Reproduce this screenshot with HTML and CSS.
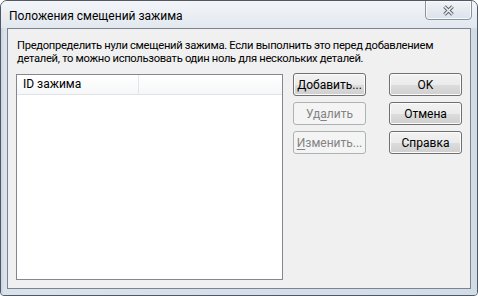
FILE: index.html
```html
<!DOCTYPE html>
<html lang="ru">
<head>
  <meta charset="UTF-8" />
  <title>Положения смещений зажима</title>
  <link rel="stylesheet" href="styles.css">
</head>
<body>
  <div class="window">
    <div class="titlebar">
      <span class="title">Положения смещений зажима</span>
      <div class="close">
        <svg width="13" height="11" viewBox="0 0 13 11">
          <path d="M2.5 1.5 L10.5 9.5 M10.5 1.5 L2.5 9.5" stroke="#5d646d" stroke-width="3.6" fill="none"/>
          <path d="M2.5 1.5 L10.5 9.5 M10.5 1.5 L2.5 9.5" stroke="#eef1f4" stroke-width="1.6" fill="none"/>
        </svg>
      </div>
    </div>
    <div class="frame">
      <div class="client">
        <p class="desc">Предопределить нули смещений зажима. Если выполнить это перед добавлением<br>деталей, то можно использовать один ноль для нескольких деталей.</p>
        <div class="body">
          <!-- list of clamp offsets, empty for now -->
          <div class="listbox">
            <div class="lv-head">
              <div class="col col-id">ID зажима</div>
              <div class="col col-rest"></div>
            </div>
          </div>
          <div class="btncol">
            <button class="btn"><u>Д</u>обавить...</button>
            <button class="btn" disabled>Уд<u>а</u>лить</button>
            <button class="btn" disabled><u>И</u>зменить...</button>
          </div>
          <div class="btncol">
            <button class="btn">OK</button>
            <button class="btn">Отмена</button>
            <button class="btn">Справка</button>
          </div>
        </div>
      </div>
    </div>
  </div>
</body>
</html>
```

FILE: styles.css
```css
:root{
  --frame:#d2dce8;
  --outer:#4f5864;
  --inner:#7b838e;
  --face:#f0f0f0;
  --text:#000000;
}
*{box-sizing:border-box}
body{margin:0;background:#fff;font-family:'Roboto','Open Sans',sans-serif;font-size:12px;color:var(--text)}
.window{width:478px;height:296px;border:1px solid var(--outer);border-radius:7px 7px 4px 4px;background:var(--frame);display:flex;flex-direction:column;overflow:hidden}
.titlebar{height:28px;display:flex;align-items:flex-start;padding:0 5px 0 8px;background:linear-gradient(#f3f5f8,#e2e8ef)}
.title{margin-top:8px;white-space:nowrap}
.close{margin-left:auto;margin-top:-1px;width:47px;height:20px;border:1px solid #8a939f;border-radius:0 0 4px 4px;background:linear-gradient(#f1f4f7,#dbe2ea);box-shadow:inset 0 0 0 1px #f7f9fb;display:flex;align-items:center;justify-content:center}
.frame{flex:1;padding:0 6px 6px;background:linear-gradient(90deg,#c8d3e0,#dae2eb 3px,#d2dce7)}
.client{height:100%;border:1px solid var(--inner);background:var(--face);padding:10px 8px 8px 8px;display:flex;flex-direction:column}
.desc{margin:0 0 8px 1px;font-size:11.2px;letter-spacing:-0.3px;line-height:13px;white-space:nowrap}
.body{flex:1;display:flex;align-items:flex-start}
.listbox{width:267px;height:206px;margin-top:1px;border:1px solid #828790;background:#fff}
.lv-head{display:flex;height:20px;border-bottom:1px solid #e2e3e5;background:linear-gradient(#ffffff,#f6f7f8)}
.col{height:19px;line-height:19px;padding-left:6px;white-space:nowrap}
.col-id{width:122px;border-right:1px solid #e3e4e6}
.col-rest{flex:1}
.btncol{display:flex;flex-direction:column;gap:6px;margin-left:10px}
.btncol + .btncol{margin-left:23px}
.btn{width:73px;height:23px;padding:0;border:1px solid #707070;border-radius:3px;font:inherit;color:var(--text);background:linear-gradient(#f2f2f2,#ebebeb 50%,#dddddd 51%,#cfcfcf);box-shadow:inset 0 0 0 1px #fbfbfb;white-space:nowrap}
.btn u{text-underline-offset:2px}
.btn:disabled{border-color:#adb2b5;background:#f4f4f4;color:#838383;box-shadow:none}
```
